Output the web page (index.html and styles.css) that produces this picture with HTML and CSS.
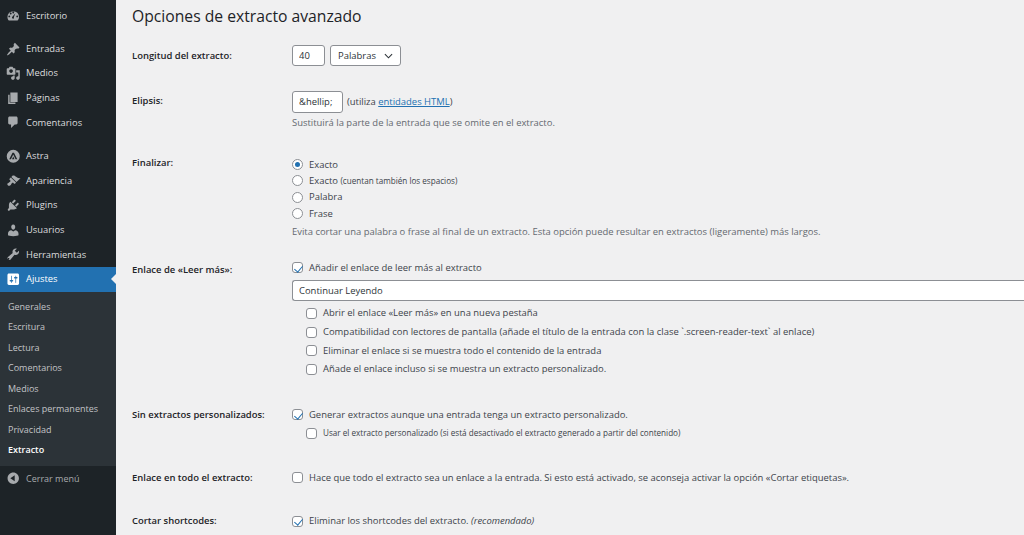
FILE: index.html
```html
<!DOCTYPE html>
<html lang="es">
<head>
  <meta charset="UTF-8">
  <title>Opciones de extracto avanzado</title>
  <link rel="stylesheet" href="styles.css">
</head>
<body>

<nav class="sidebar">
  <ul class="menu first">
    <li><svg viewBox="0 0 20 20"><path fill-rule="evenodd" d="M10 3a8 8 0 0 0-8 8c0 2 .7 3.800 2 5h12a8 8 0 0 0 2-5 8 8 0 0 0-8-8zm-5.500 8.500a1.300 1.300 0 1 1 0-2.600 1.300 1.300 0 0 1 0 2.600zm2-4a1.300 1.300 0 1 1 0-2.600 1.300 1.300 0 0 1 0 2.600zM10 13.500a1.800 1.800 0 0 1-1-3.300L13 6l-2.200 5.500c.7.900 0 2-.8 2zm0-7.300a1.300 1.300 0 1 1 0-2.600 1.300 1.300 0 0 1 0 2.600zm5.500 5.300a1.300 1.300 0 1 1 0-2.600 1.300 1.300 0 0 1 0 2.600z"/></svg>Escritorio</li>
  </ul>
  <ul class="menu second">
    <li><svg viewBox="0 0 20 20"><path d="M10.440 3.020l1.820-1.820 6.360 6.350-1.830 1.820c-1.050-.68-2.480-.57-3.410.36l-.75.75c-.92.93-1.040 2.350-.35 3.410l-1.830 1.820-2.410-2.410-2.800 2.790c-.42.42-3.380 2.710-3.800 2.290s1.860-3.390 2.280-3.810l2.790-2.790L4.100 9.360l1.830-1.820c1.050.69 2.480.57 3.400-.36l.75-.75c.93-.92 1.050-2.350.36-3.410z"/></svg>Entradas</li>
    <li><svg viewBox="0 0 20 20"><path fill-rule="evenodd" d="M13 11V4c0-.55-.45-1-1-1h-1.670L9 1H5L3.670 3H2c-.55 0-1 .45-1 1v7c0 .55.45 1 1 1h10c.55 0 1-.45 1-1zM7 4.500c1.380 0 2.500 1.120 2.500 2.500S8.380 9.500 7 9.500 4.500 8.380 4.500 7 5.620 4.500 7 4.500zM14 6h5v10.500c0 1.380-1.120 2.500-2.500 2.500S14 17.880 14 16.500s1.120-2.500 2.500-2.500c.17 0 .34.020.5.050V9h-3V6zm-4 8.050V13h2v3.500c0 1.380-1.120 2.500-2.500 2.500S7 17.880 7 16.500 8.120 14 9.500 14c.17 0 .34.020.5.050z"/></svg>Medios</li>
    <li><svg viewBox="0 0 20 20"><path d="M6 15V2h10v13H6zm-1 1h8v2H3V5h2v11z"/></svg>Páginas</li>
    <li><svg viewBox="0 0 20 20"><path d="M5 2h9c1.100 0 2 .9 2 2v7c0 1.100-.9 2-2 2h-2l-5 5v-5H5c-1.100 0-2-.9-2-2V4c0-1.100.9-2 2-2z"/></svg>Comentarios</li>
  </ul>
  <ul class="menu third">
    <li><svg viewBox="0 0 20 20"><path fill-rule="evenodd" d="M10 1a9 9 0 1 1 0 18 9 9 0 0 1 0-18zM9 5L4.500 14h2.300L10 7.500l3.200 6.500h2.300L11 5zm1 5.500L8.300 14h3.400z"/></svg>Astra</li>
    <li><svg viewBox="0 0 20 20"><path d="M14.480 11.060L7.410 3.990l1.500-1.500c.5-.56 2.300-.47 3.510.32 1.210.8 1.430 1.280 2.910 2.100 1.180.64 2.450 1.260 4.670.85zm-.71.71L6.700 4.700 4.930 6.470c-.39.39-.39 1.020 0 1.410l1.060 1.060c.39.39.39 1.030 0 1.420-.6.6-1.430 1.110-2.210 1.690-.35.26-.7.53-1.010.84C1.430 13.230 1.490 14.480 2.500 15.500c.99.99 2.240 1.060 3.580-.05.3-.31.58-.66.84-1.020.57-.78 1.070-1.600 1.660-2.190.39-.39 1.030-.39 1.420 0l1.060 1.060c.39.39 1.020.39 1.410 0z"/></svg>Apariencia</li>
    <li><svg viewBox="0 0 20 20"><path d="M13.110 4.360L9.870 7.600 8 5.730l3.240-3.240c.35-.34 1.050-.2 1.560.32.52.51.66 1.210.31 1.550zm-8 1.770l.91-1.120 9.010 9.010-1.190.84c-.71.71-2.630 1.160-3.820 1.160H6.140L4.900 17.260c-.59.59-1.540.59-2.120 0-.59-.58-.59-1.530 0-2.120l1.240-1.240v-3.880c0-1.130.4-3.180 1.090-3.890zm7.260 3.970l3.240-3.240c.34-.35 1.040-.21 1.550.31.52.51.66 1.210.31 1.550l-3.240 3.250z"/></svg>Plugins</li>
    <li><svg viewBox="0 0 20 20"><path d="M10 9.250c-2.270 0-2.730-3.440-2.730-3.440C7 4.020 7.820 2 9.970 2c2.160 0 2.980 2.020 2.710 3.810 0 0-.41 3.440-2.680 3.440zm0 2.570L12.720 10c2.390 0 4.520 2.330 4.520 4.530v2.490s-3.650 1.130-7.240 1.130c-3.650 0-7.240-1.130-7.240-1.130v-2.490c0-2.250 1.940-4.480 4.470-4.480z"/></svg>Usuarios</li>
    <li><svg viewBox="0 0 20 20"><path fill-rule="evenodd" d="M16.680 9.770c-1.340 1.340-3.300 1.670-4.950.99l-5.410 6.520c-.99.99-2.590.99-3.570 0-.99-.98-.99-2.580 0-3.570l6.520-5.420c-.68-1.650-.35-3.610.99-4.950 1.280-1.280 3.120-1.620 4.720-1.060l-2.890 2.890 2.820 2.820 2.860-2.870c.53 1.580.18 3.400-1.090 4.670zM4.360 15.640c-.44-.44-1.150-.44-1.590 0s-.44 1.150 0 1.590 1.150.44 1.590 0 .44-1.150 0-1.590z"/></svg>Herramientas</li>
    <li class="current"><svg viewBox="0 0 20 20"><path fill-rule="evenodd" d="M18 16V4c0-1.100-.9-2-2-2H4c-1.100 0-2 .9-2 2v12c0 1.100.9 2 2 2h12c1.100 0 2-.9 2-2zM8 11h1c.55 0 1 .45 1 1s-.45 1-1 1H8v1.500c0 .28-.22.5-.5.5s-.5-.22-.5-.5V13H6c-.55 0-1-.45-1-1s.45-1 1-1h1V5.500c0-.28.22-.5.5-.5s.5.22.5.5V11zm5-2h-1c-.55 0-1-.45-1-1s.45-1 1-1h1V5.500c0-.28.22-.5.5-.5s.5.22.5.5V7h1c.55 0 1 .45 1 1s-.45 1-1 1h-1v5.500c0 .28-.22.5-.5.5s-.5-.22-.5-.5V9z"/></svg>Ajustes</li>
  </ul>
  <ul class="submenu">
    <li>Generales</li>
    <li>Escritura</li>
    <li>Lectura</li>
    <li>Comentarios</li>
    <li>Medios</li>
    <li>Enlaces permanentes</li>
    <li>Privacidad</li>
    <li class="active">Extracto</li>
  </ul>
  <div class="collapse"><svg viewBox="0 0 20 20"><path fill-rule="evenodd" d="M10 2.160c4.330 0 7.840 3.510 7.840 7.840s-3.510 7.840-7.840 7.840S2.160 14.330 2.160 10 5.670 2.160 10 2.160zM12 14V6l-6 4z"/></svg>Cerrar menú</div>
</nav>

<main class="content">
  <h1>Opciones de extracto avanzado</h1>

  <div class="row row-length">
    <div class="label">Longitud del extracto:</div>
    <div class="field inline">
      <input class="text num" type="text" value="40">
      <div class="select">Palabras
        <svg viewBox="0 0 10 6"><path d="M1 1l4 4 4-4" fill="none" stroke="#2c3338" stroke-width="1.200"/></svg>
      </div>
    </div>
  </div>

  <div class="row row-ellipsis">
    <div class="label">Elipsis:</div>
    <div class="field">
      <div class="inline">
        <input class="text dots" type="text" value="&amp;hellip;">
        <span>(utiliza <a href="#">entidades HTML</a>)</span>
      </div>
      <p class="help">Sustituirá la parte de la entrada que se omite en el extracto.</p>
    </div>
  </div>

  <div class="row row-finish">
    <div class="label">Finalizar:</div>
    <div class="field">
      <label class="opt"><span class="radio on"></span>Exacto</label>
      <label class="opt"><span class="radio"></span>Exacto&nbsp;<small>(cuentan también los espacios)</small></label>
      <label class="opt"><span class="radio"></span>Palabra</label>
      <label class="opt"><span class="radio"></span>Frase</label>
      <p class="help">Evita cortar una palabra o frase al final de un extracto. Esta opción puede resultar en extractos (ligeramente) más largos.</p>
    </div>
  </div>

  <div class="row row-more">
    <div class="label">Enlace de «Leer más»:</div>
    <div class="field">
      <label class="opt"><span class="check on"></span>Añadir el enlace de leer más al extracto</label>
      <input class="text wide" type="text" value="Continuar Leyendo">
      <div class="suboptions">
        <label class="opt"><span class="check"></span>Abrir el enlace «Leer más» en una nueva pestaña</label>
        <label class="opt"><span class="check"></span>Compatibilidad con lectores de pantalla (añade el título de la entrada con la clase `.screen-reader-text` al enlace)</label>
        <label class="opt"><span class="check"></span>Eliminar el enlace si se muestra todo el contenido de la entrada</label>
        <label class="opt"><span class="check"></span>Añade el enlace incluso si se muestra un extracto personalizado.</label>
      </div>
    </div>
  </div>

  <div class="row row-custom">
    <div class="label">Sin extractos personalizados:</div>
    <div class="field">
      <label class="opt"><span class="check on"></span>Generar extractos aunque una entrada tenga un extracto personalizado.</label>
      <div class="suboptions">
        <label class="opt"><span class="check"></span><small>Usar el extracto personalizado (si está desactivado el extracto generado a partir del contenido)</small></label>
      </div>
    </div>
  </div>

  <div class="row row-link">
    <div class="label">Enlace en todo el extracto:</div>
    <div class="field">
      <label class="opt"><span class="check"></span>Hace que todo el extracto sea un enlace a la entrada. Si esto está activado, se aconseja activar la opción «Cortar etiquetas».</label>
    </div>
  </div>

  <div class="row row-strip">
    <div class="label">Cortar shortcodes:</div>
    <div class="field">
      <label class="opt"><span class="check on"></span>Eliminar los shortcodes del extracto.&nbsp;<em>(recomendado)</em></label>
    </div>
  </div>
</main>

</body>
</html>
```

FILE: styles.css
```css
* {
  box-sizing: border-box;
}
body {
  margin: 0;
  display: flex;
  height: 535px;
  overflow: hidden;
  background-color: #f0f0f1;
  color: #3c434a;
  font-family: "Open Sans", "Noto Sans", sans-serif;
  font-size: 9.450px;
  line-height: 14px;
}

/* left admin menu */
.sidebar {
  flex: 0 0 116px;
  background-color: #1d2327;
  color: #dcdcde;
  padding-top: 4px;
}
.menu {
  list-style: none;
  margin: 0;
  padding: 0;
}
.first {
  margin-bottom: 8px;
}
.second {
  margin-bottom: 9px;
}
.menu li {
  display: flex;
  align-items: center;
  height: 24.600px;
  padding-left: 6px;
  font-size: 9.400px;
  position: relative;
}
.menu svg, .collapse svg {
  flex: none;
  width: 14.500px;
  height: 14.500px;
  margin-right: 5.500px;
  fill: #a7aaad;
}
.menu .current {
  background-color: #2271b1;
  color: #fff;
}
.menu .current svg {
  fill: #fff;
}
.menu .current::after {
  content: "";
  position: absolute;
  right: 0;
  top: 7px;
  border: 5px solid transparent;
  border-right-color: #f0f0f1;
  border-left-width: 0;
}
.submenu {
  list-style: none;
  margin: 0;
  padding: 5px 0;
  background-color: #2c3338;
}
.submenu li {
  height: 20.500px;
  line-height: 20.500px;
  padding-left: 8px;
  font-size: 9px;
  color: #c3c4c7;
}
.submenu .active {
  color: #fff;
  font-weight: 600;
}
.collapse {
  display: flex;
  align-items: center;
  height: 26px;
  padding-left: 6px;
  font-size: 9px;
  color: #a7aaad;
}

/* settings form */
.content {
  flex: 1;
  min-width: 0;
  padding-left: 16px;
}
h1 {
  margin: 5px 0 18px;
  font-size: 15.700px;
  line-height: 22px;
  font-weight: 400;
  color: #1d2327;
}
.row {
  display: flex;
}
.label {
  flex: 0 0 160px;
  font-weight: 600;
  color: #1d2327;
  padding-top: 3px;
}
.field {
  flex: 1;
  min-width: 0;
}
.inline {
  display: flex;
  align-items: center;
  gap: 4px;
}
.text {
  height: 21px;
  padding: 0 6px;
  border: 1px solid #8c8f94;
  border-radius: 3px;
  background-color: #fff;
  color: #2c3338;
  font: inherit;
}
.num {
  width: 33px;
}
.dots {
  width: 51px;
  height: 22px;
}
.wide {
  display: block;
  width: 100%;
  margin: 4px 0 3px;
  border-right: 0;
  border-radius: 3px 0 0 3px;
}
.select {
  display: flex;
  align-items: center;
  justify-content: space-between;
  width: 71px;
  height: 21px;
  margin-left: 1px;
  padding: 0 7px;
  border: 1px solid #8c8f94;
  border-radius: 3px;
  background-color: #fff;
  color: #2c3338;
}
.select svg {
  width: 9px;
  height: 6px;
}
a {
  color: #2271b1;
}
.help {
  margin: 3px 0 0;
  color: #646970;
}
.opt {
  display: flex;
  align-items: center;
  height: 16.300px;
  white-space: nowrap;
}
.opt small {
  font-size: 8.150px;
}
.radio, .check {
  flex: none;
  width: 11px;
  height: 11px;
  margin-right: 6px;
  border: 1px solid #8c8f94;
  background-color: #fff;
  position: relative;
}
.radio {
  border-radius: 50%;
}
.check {
  border-radius: 3px;
}
.radio.on::before {
  content: "";
  position: absolute;
  inset: 2px;
  border-radius: 50%;
  background-color: #2271b1;
}
.check.on::before {
  content: "";
  position: absolute;
  left: 3px;
  top: 0.500px;
  width: 4px;
  height: 7px;
  border: solid #2271b1;
  border-width: 0 1.500px 1.500px 0;
  transform: rotate(40deg);
}
.suboptions {
  padding-left: 14px;
}
.suboptions .opt {
  height: 18.700px;
}
.row-length { margin-bottom: 24.500px; }
.row-ellipsis { margin-bottom: 27px; }
.row-finish { margin-bottom: 21px; }
.row-more { margin-bottom: 28px; }
.row-custom { margin-bottom: 27px; }
.row-link { margin-bottom: 27px; }
.row-custom .suboptions { padding-top: 1px; }
.row-length .label { padding-top: 4px; }
.row-finish .label { padding-top: 0; margin-top: -1px; }
.row-custom .label, .row-link .label, .row-strip .label { padding-top: 1px; }
```
